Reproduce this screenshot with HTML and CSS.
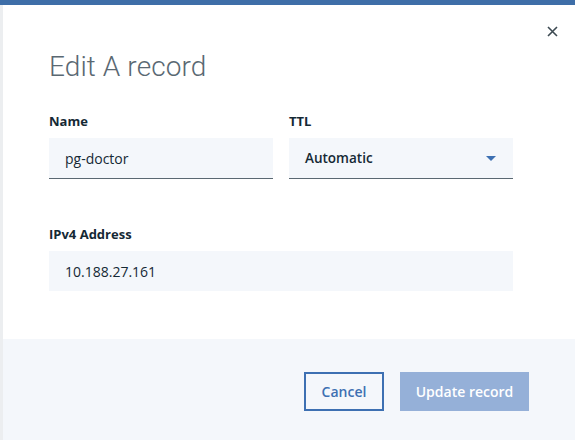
FILE: index.html
```html
<!DOCTYPE html>
<html>
<head>
<meta charset="utf-8">
<link rel="stylesheet" href="styles.css">
</head>
<body>
<div class="topbar"></div>
<div class="frame">
  <div class="modal">
    <div class="modal-body">
      <button class="close" aria-label="Close">
        <svg width="11" height="11" viewBox="0 0 11 11"><path d="M1 1 L10 10 M10 1 L1 10" stroke="#3d4a52" stroke-width="1.6" fill="none"/></svg>
      </button>
      <h1 class="title">Edit A record</h1>
      <div class="row">
        <div class="field">
          <label class="label">Name</label>
          <div class="input underlined">pg-doctor</div>
        </div>
        <div class="field">
          <label class="label">TTL</label>
          <div class="input underlined select">
            <span class="select-text">Automatic</span>
            <svg class="caret" width="10" height="5" viewBox="0 0 10 5"><path d="M0 0 L10 0 L5 5 Z" fill="#3d70b2"/></svg>
          </div>
        </div>
      </div>
      <div class="field wide">
        <label class="label">IPv4 Address</label>
        <div class="input">10.188.27.161</div>
      </div>
    </div>
    <div class="footer">
      <button class="btn secondary">Cancel</button>
      <button class="btn primary">Update record</button>
    </div>
  </div>
</div>
</body>
</html>
```
FILE: styles.css
```css
* { box-sizing: border-box; }
html, body { margin: 0; padding: 0; }
body {
  width: 575px;
  height: 440px;
  overflow: hidden;
  background: #fff;
  font-family: "Open Sans", "Noto Sans", sans-serif;
  color: #152935;
}
.topbar { height: 5px; background: #3e6ea8; }
.frame {
  display: flex;
  height: 435px;
  border-left: 3px solid #eceef0;
}
.modal {
  flex: 1;
  display: flex;
  flex-direction: column;
}
.modal-body {
  position: relative;
  height: 334px;
  padding: 46px 0 0 46px;
}
.close {
  position: absolute;
  top: 15px;
  right: 12px;
  width: 22px;
  height: 22px;
  padding: 0;
  border: 0;
  background: transparent;
  display: flex;
  align-items: center;
  justify-content: center;
}
.title {
  margin: 0;
  font-family: Roboto, sans-serif;
  font-weight: 300;
  font-size: 28px;
  line-height: 32px;
  color: #5a6872;
  letter-spacing: 0.1px;
}
.row {
  display: flex;
  gap: 16px;
  margin-top: 29px;
}
.field { width: 224px; display: flex; flex-direction: column; }
.field.wide { width: 464px; margin-top: 46px; }
.label {
  font-size: 13px;
  font-weight: 700;
  line-height: 18px;
  color: #152935;
  margin-bottom: 8px;
}
.input {
  height: 40px;
  background: #f4f7fb;
  padding: 0 16px;
  display: flex;
  align-items: center;
  font-size: 14px;
  color: #152935;
}
.input.underlined { height: 41px; border-bottom: 1px solid #5a6872; }
.select { justify-content: space-between; padding-right: 17px; }
.select-text { font-weight: 600; font-size: 13.5px; }
.caret { display: block; }
.footer {
  flex: 1;
  background: #f4f7fb;
  display: flex;
  justify-content: flex-end;
  align-items: flex-start;
  gap: 16px;
  padding: 33px 46px 0 0;
}
.btn {
  height: 39px;
  font-family: "Open Sans", "Noto Sans", sans-serif;
  font-size: 14px;
  font-weight: 600;
  border: 0;
  padding: 0;
}
.btn.secondary {
  width: 80px;
  background: transparent;
  border: 2px solid #3d70b2;
  color: #3d70b2;
}
.btn.primary {
  width: 129px;
  background: #95b0d8;
  color: #fff;
}
```
